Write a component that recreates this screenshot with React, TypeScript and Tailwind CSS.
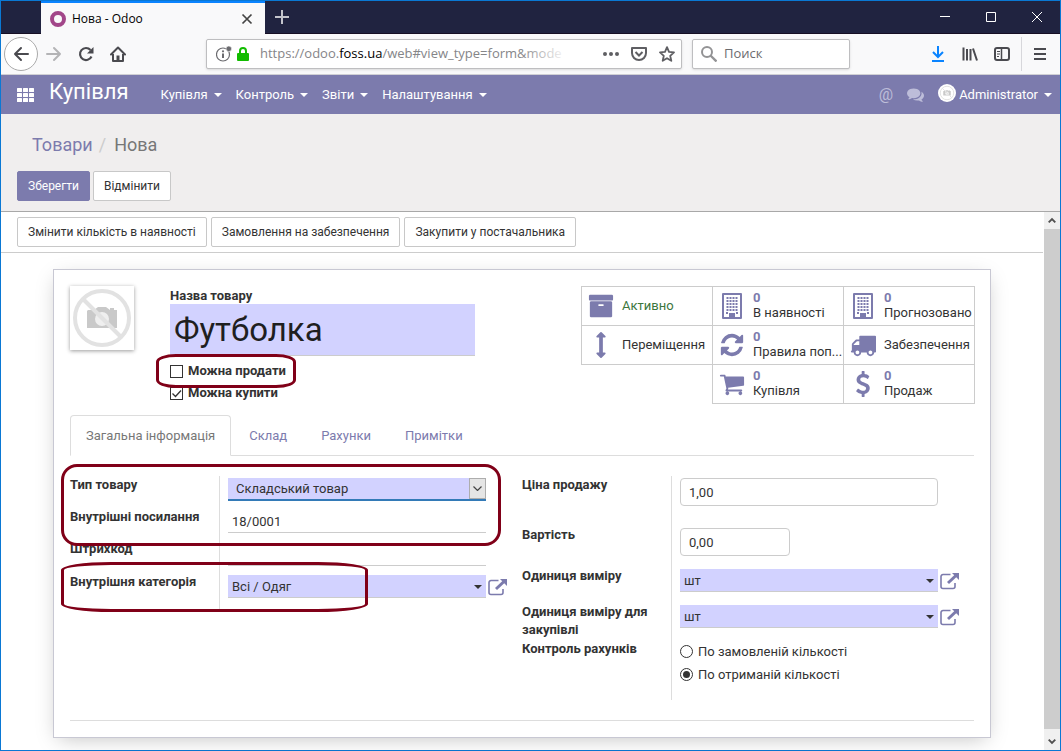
import { useState, type ReactNode } from 'react';

// 1792-unit icon glyphs used across the backend
const ICONS = {
    archive: 'M1088 832q0-26-19-45t-45-19h-256q-26 0-45 19t-19 45 19 45 45 19h256q26 0 45-19t19-45zm576-192v960q0 26-19 45t-45 19h-1408q-26 0-45-19t-19-45v-960q0-26 19-45t45-19h1408q26 0 45 19t19 45zm64-448v256q0 26-19 45t-45 19h-1536q-26 0-45-19t-19-45v-256q0-26 19-45t45-19h1536q26 0 45 19t19 45z',
    arrowsV: 'M1216 320q0 26-19 45t-45 19h-128v1024h128q26 0 45 19t19 45-19 45l-256 256q-19 19-45 19t-45-19l-256-256q-19-19-19-45t19-45 45-19h128v-1024h-128q-26 0-45-19t-19-45 19-45l256-256q19-19 45-19t45 19l256 256q19 19 19 45z',
    refresh: 'M1639 1056q0 5-1 7-64 268-268 434.500t-478 166.500q-146 0-282.500-55t-243.500-157l-129 129q-19 19-45 19t-45-19-19-45v-448q0-26 19-45t45-19h448q26 0 45 19t19 45-19 45l-137 137q71 66 161 102t187 36q134 0 250-65t186-179q11-17 53-117 8-23 30-23h192q13 0 22.500 9.500t9.500 22.500zm25-800v448q0 26-19 45t-45 19h-448q-26 0-45-19t-19-45 19-45l138-138q-148-137-349-137-134 0-250 65t-186 179q-11 17-53 117-8 23-30 23h-199q-13 0-22.500-9.500t-9.500-22.500v-7q65-268 270-434.500t480-166.500q146 0 284 55.500t245 156.500l130-129q19-19 45-19t45 19 19 45z',
    truck: 'M640 1408q0-52-38-90t-90-38-90 38-38 90 38 90 90 38 90-38 38-90zm-384-512h384v-256h-158q-13 0-22 9l-195 195q-9 9-9 22v30zm1280 512q0-52-38-90t-90-38-90 38-38 90 38 90 90 38 90-38 38-90zm256-1088v1024q0 15-4 26.500t-13.500 18.500-16.500 11.500-23.500 6-22.500 2-25.500 0-22.500-.5q0 106-75 181t-181 75-181-75-75-181h-384q0 106-75 181t-181 75-181-75-75-181h-64q-3 0-22.500.5t-25.500 0-22.500-2-23.500-6-16.500-11.500-13.500-18.500-4-26.500q0-26 19-45t45-19v-320q0-8-.5-35t0-38 2.500-34.500 6.500-37 14-30.500 22.500-30l198-198q19-19 50.500-32t58.500-13h160v-192q0-26 19-45t45-19h1024q26 0 45 19t19 45z',
    cart: 'M704 1536q0 52-38 90t-90 38-90-38-38-90 38-90 90-38 90 38 38 90zm896 0q0 52-38 90t-90 38-90-38-38-90 38-90 90-38 90 38 38 90zm128-1088v512q0 24-16.500 42.500t-40.500 21.500l-1044 122q13 60 13 70 0 16-24 64h920q26 0 45 19t19 45-19 45-45 19h-1024q-26 0-45-19t-19-45q0-11 8-31.500t16-36 21.500-40 15.500-29.500l-177-823h-204q-26 0-45-19t-19-45 19-45 45-19h256q16 0 28.500 6.500t19.500 15.500 13 24.500 8 26 5.500 29.500 4.500 26h1201q26 0 45 19t19 45z',
    usd: 'M1362 1185q0 153-99.500 263.500t-258.500 136.500v175q0 14-9 23t-23 9h-135q-13 0-22.500-9.500t-9.500-22.500v-175q-66-9-127.500-31t-101.500-44.500-74-48-46.500-37.500-17.500-18q-17-21-2-41l103-135q7-10 23-12 15-2 24 9l2 2q113 99 243 125 37 8 74 8 81 0 142.500-43t61.500-122q0-28-15-53t-33.500-42-58.500-37.500-66-32-80-32.500q-39-16-61.500-25t-61.500-26.500-62.500-31-56.500-35.500-53.500-42.500-43.500-49-35.500-58-21-66.500-8.500-78q0-138 98-242t255-134v-180q0-13 9.500-22.500t22.500-9.500h135q14 0 23 9t9 23v176q57 6 110.500 23t87 33.500 63.500 37.500 39 29 15 14q17 18 5 38l-81 146q-8 15-23 16-14 3-27-7-3-3-14.500-12t-39-26.500-58.500-32-74.500-26-85.500-11.500q-95 0-155 43t-60 111q0 26 8.500 48t29.500 41.500 39.500 33 56 31 60.500 27 70 27.500q53 20 81 31.500t76 35 75.500 42.500 62 50 53 63.500 31.500 76.500 13 94z',
    comments: 'M1408 768q0 139-94 257t-256.500 186.500-353.500 68.500q-86 0-176-16-124 88-278 128-36 9-86 16h-3q-11 0-20.500-8t-11.500-21q-1-3-1-6.500t.5-6.500 2-6l2.500-5 3.500-5.500 4-5 4.500-5 4-4.500q5-6 23-25t26-29.500 22.500-29 25-38.500 20.500-44q-124-72-195-177t-71-224q0-139 94-257t256.500-186.500 353.500-68.500 353.500 68.500 256.500 186.500 94 257zm384 256q0 120-71 224.500t-195 176.500q10 24 20.500 44t25 38.500 22.500 29 26 29.500 23 25q1 1 4 4.500t4.500 5 4 5 3.500 5.500l2.500 5 2 6 .5 6.500-1 6.500q-3 14-13 22t-22 7q-50-7-86-16-154-40-278-128-90 16-176 16-271 0-472-132 58 4 88 4 161 0 309-45t264-129q125-92 192-212t67-254q0-77-23-152 129 71 204 178t75 230z',
};

function Glyph({ name, className }: { name: keyof typeof ICONS; className: string }) {
    return (
        <svg viewBox="0 0 1792 1792" fill="currentColor" className={className}>
            <path d={ICONS[name]} />
        </svg>
    );
}

function BuildingIcon() {
    const rows = [4, 7, 10, 13, 16];
    const cols = [5, 8, 11, 14];
    return (
        <svg viewBox="0 0 20 26" className="w-5 h-[26px]" fill="currentColor">
            <path fillRule="evenodd" d="M1 0h18a1 1 0 0 1 1 1v24a1 1 0 0 1-1 1H1a1 1 0 0 1-1-1V1a1 1 0 0 1 1-1zm1 2v22h5v-4h6v4h5V2z" />
            {rows.map((y) => cols.map((x) => <rect key={`${x}-${y}`} x={x - 0.5} y={y} width="2" height="2" />))}
            <rect x="4" y="19" width="2" height="2" />
            <rect x="14" y="19" width="2" height="2" />
        </svg>
    );
}

function Caret() {
    return (
        <svg viewBox="0 0 8 4" className="w-2 h-1 shrink-0" fill="currentColor">
            <path d="M0 0h8L4 4z" />
        </svg>
    );
}

function ExternalLink() {
    return (
        <button aria-label="Відкрити" className="shrink-0 text-[#7c7bad]">
            <svg viewBox="0 0 20 18" className="w-5 h-[18px]" fill="none" stroke="currentColor">
                <path d="M10.500 2.500H3A2 2 0 0 0 1 4.500V14.500A2 2 0 0 0 3 16.500H13A2 2 0 0 0 15 14.500V11" strokeWidth="1.600" />
                <path d="M8 11L16 3.500" strokeWidth="3" />
                <path d="M12 1h7v7z" fill="currentColor" stroke="none" />
            </svg>
        </button>
    );
}

function NoPhoto({ className }: { className: string }) {
    return (
        <svg viewBox="0 0 64 64" className={className}>
            <path d="M18 24h6l4-3h8l4 3h7v18H17V25z" fill="#c9c9c9" />
            <rect x="40" y="22" width="4" height="4" fill="#c9c9c9" />
            <circle cx="32" cy="33" r="7" fill="#efefef" />
            <circle cx="32" cy="32" r="27" fill="none" stroke="#e2e2e2" strokeWidth="4" />
            <path d="M13 13l38 38" stroke="#e2e2e2" strokeWidth="4" />
        </svg>
    );
}

function BrowserChrome() {
    return (
        <div className="font-['Open_Sans',sans-serif]">
            <div className="flex h-[33px] bg-[#202340] border-b border-[#160f24]">
                <div className="flex items-center ml-10 w-56 px-2 -mb-px bg-[#f9f9fa] border-t-2 border-[#0a84ff]">
                    <span className="ml-px mr-1.5 w-4 h-4 rounded-full border-4 border-[#a24689]" />
                    <span className="text-[12px] text-black flex-1">Нова - Odoo</span>
                    <button aria-label="Закрити вкладку" className="mr-1 text-[#444]">
                        <svg viewBox="0 0 12 12" className="w-3 h-3" stroke="currentColor" strokeWidth="1.700"><path d="M1.500 1.500l9 9M10.500 1.500l-9 9" /></svg>
                    </button>
                </div>
                <button aria-label="Нова вкладка" className="ml-2.5">
                    <svg viewBox="0 0 14 14" className="w-3.5 h-3.5" stroke="#c3c4cc" strokeWidth="2"><path d="M7 0v14M0 7h14" /></svg>
                </button>
                <div className="flex items-center ml-auto mr-[18px] gap-9">
                    <button aria-label="Згорнути"><svg viewBox="0 0 10 10" className="w-2.5 h-2.5" stroke="#fff"><path d="M0 4.500h10" /></svg></button>
                    <button aria-label="Розгорнути"><svg viewBox="0 0 10 10" className="w-2.5 h-2.5" stroke="#fff" fill="none"><path d="M.5.500h9v9h-9z" /></svg></button>
                    <button aria-label="Закрити"><svg viewBox="0 0 10 10" className="w-2.5 h-2.5" stroke="#fff"><path d="M0 0l10 10M10 0L0 10" /></svg></button>
                </div>
            </div>

            <div className="flex items-center h-[41px] pl-[3px] pr-3.5 bg-[#f9f9fa] border-b border-[#d0d0d4] text-[#4a4a4f]">
                <button aria-label="Назад" className="flex items-center justify-center w-[34px] h-[34px] rounded-full bg-white border border-[#aaa]">
                    <svg viewBox="0 0 16 16" className="w-4 h-4" fill="none" stroke="currentColor" strokeWidth="2" strokeLinecap="round" strokeLinejoin="round"><path d="M15 8H2M8 2L2 8l6 6" /></svg>
                </button>
                <button aria-label="Вперед" className="ml-2 text-[#b4b4b6]">
                    <svg viewBox="0 0 16 16" className="w-4 h-4" fill="none" stroke="currentColor" strokeWidth="2" strokeLinecap="round" strokeLinejoin="round"><path d="M1 8h13M8 2l6 6-6 6" /></svg>
                </button>
                <button aria-label="Оновити" className="ml-4">
                    <svg viewBox="0 0 16 16" className="w-4 h-4"><path d="M13.500 10.500A6 6 0 1 1 12.500 4" fill="none" stroke="currentColor" strokeWidth="2.200" /><path d="M15.500 1v6.500H9z" fill="currentColor" /></svg>
                </button>
                <button aria-label="Додому" className="ml-4">
                    <svg viewBox="0 0 16 16" className="w-4 h-4" fill="none" stroke="currentColor" strokeWidth="2" strokeLinejoin="round"><path d="M1 8.500L8 1.500l7 7" strokeLinecap="round" /><path d="M3 8v7h10V8" /><path d="M8 9.500V15" strokeWidth="3" /></svg>
                </button>
                <div className="flex-1" />
                <div className="flex items-center w-[476px] h-[30px] px-2 bg-white border border-[#bebec0] rounded-xs shadow-sm">
                    <svg viewBox="0 0 16 16" className="w-4 h-4 shrink-0 ml-px" fill="none" stroke="#6b6b6f"><circle cx="7" cy="8.500" r="6.500" strokeWidth="1.200" /><path d="M7 7.500v4.500" strokeWidth="2" /><circle cx="7" cy="5.300" r="1.100" fill="#6b6b6f" stroke="none" /><circle cx="12.800" cy="2.800" r="2.800" fill="#6b6b6f" stroke="#fff" strokeWidth=".6" /></svg>
                    <svg viewBox="0 0 12 14" className="w-3 h-3.5 shrink-0 ml-[5px]"><rect y="6" width="12" height="8" rx="1" fill="#12bc00" /><path d="M3 7V4a3 3 0 0 1 6 0v3" fill="none" stroke="#12bc00" strokeWidth="2" /></svg>
                    <div className="relative ml-[11px] w-[308px] overflow-hidden whitespace-nowrap text-[13px] text-[#858588]">
                        https://odoo.<span className="text-black">foss.ua</span>/web#view_type=form&amp;mode
                        <span className="absolute inset-y-0 right-0 w-12 bg-linear-to-r from-transparent to-white" />
                    </div>
                    <button aria-label="Дії" className="ml-auto"><svg viewBox="0 0 16 4" className="w-4 h-1" fill="#5f5f63"><circle cx="2" cy="2" r="2" /><circle cx="8" cy="2" r="2" /><circle cx="14" cy="2" r="2" /></svg></button>
                    <button aria-label="Pocket" className="ml-3 text-[#5f5f63]"><svg viewBox="0 0 16 14" className="w-4 h-3.5" fill="none" stroke="currentColor" strokeWidth="2"><path d="M1 1h14v5a7 7 0 0 1-14 0z" strokeLinejoin="round" /><path d="M4.500 5L8 8.500 11.500 5" /></svg></button>
                    <button aria-label="Закладка" className="ml-3 -mr-0.5 text-[#5f5f63]"><svg viewBox="0 0 16 16" className="w-4 h-4" fill="none" stroke="currentColor" strokeWidth="1.800" strokeLinejoin="round"><path d="M8 1.200l2 4.700 5 .5-3.800 3.400 1.100 5L8 12.200l-4.300 2.600 1.100-5L1 6.400l5-.5z" /></svg></button>
                </div>
                <div className="flex items-center ml-2.5 w-[158px] h-[30px] pl-2 bg-white border border-[#bebec0] rounded-xs shadow-sm">
                    <svg viewBox="0 0 16 16" className="w-4 h-4 shrink-0" fill="none" stroke="#939395" strokeWidth="2"><circle cx="6" cy="6" r="5" /><path d="M9.500 9.500l6 6" strokeWidth="2.400" /></svg>
                    <input aria-label="Поиск" placeholder="Поиск" className="ml-[7px] w-full min-w-0 text-[13px] placeholder-[#6c6c6f] outline-none" />
                </div>
                <div className="flex-1" />
                <div className="flex items-center gap-4">
                    <button aria-label="Завантаження"><svg viewBox="0 0 16 16" className="w-4 h-4" fill="none" stroke="#0a84ff" strokeWidth="2"><path d="M8 0v11M3 6l5 5 5-5M2 15h12" /></svg></button>
                    <button aria-label="Бібліотека"><svg viewBox="0 0 16 16" className="w-4 h-4" fill="none" stroke="currentColor" strokeWidth="2"><path d="M1.500 1.500v13M5 3v11.500M8.500 3v11.500" /><path d="M11 2.500l4 12" /></svg></button>
                    <button aria-label="Бічна панель"><svg viewBox="0 0 16 14" className="w-4 h-3.5" fill="none" stroke="currentColor"><rect x="1" y="1" width="14" height="12" rx="2" strokeWidth="2" /><path d="M7.500 1v12" strokeWidth="1.500" /><path d="M3 4.500h3M3 7h3M3 9.500h2" /></svg></button>
                </div>
                <span className="ml-[11px] h-[34px] border-l border-[#d7d7db]" />
                <button aria-label="Меню" className="ml-3"><svg viewBox="0 0 12 12" className="w-3 h-3" stroke="currentColor" strokeWidth="2"><path d="M0 1h12M0 6h12M0 11h12" /></svg></button>
            </div>
        </div>
    );
}

function NavMenu({ label }: { label: string }) {
    return (
        <button className="flex items-center gap-1.5">
            {label}
            <Caret />
        </button>
    );
}

function Navbar() {
    return (
        <nav className="flex items-center h-[39px] pl-4 pr-2 bg-[#7c7bad] text-white text-[13px]">
            <button aria-label="Програми">
                <svg viewBox="0 0 17 14" className="w-[17px] h-3.5" fill="#fff">
                    {[0, 5, 10].map((y) => [0, 6, 12].map((x) => <rect key={`${x}-${y}`} x={x} y={y} width="5" height="4" rx=".5" />))}
                </svg>
            </button>
            <span className="ml-[15px] mb-1.5 text-[22px] leading-7">Купівля</span>
            <div className="flex gap-3.5 ml-8">
                <NavMenu label="Купівля" />
                <NavMenu label="Контроль" />
                <NavMenu label="Звіти" />
                <NavMenu label="Налаштування" />
            </div>
            <div className="flex items-center ml-auto">
                <button className="text-base text-[#bdbdd9]">@</button>
                <button aria-label="Обговорення" className="ml-3.5 text-[#bdbdd9]"><Glyph name="comments" className="w-[17px] h-[17px]" /></button>
                <button className="flex items-center ml-3.5">
                    <span className="flex items-center justify-center w-[18px] h-[18px] mr-[3px] mb-1 rounded-full bg-white"><NoPhoto className="w-4 h-4" /></span>
                    <span className="mr-1.5">Administrator</span>
                    <Caret />
                </button>
            </div>
        </nav>
    );
}

function Button({ children, primary }: { children: ReactNode; primary?: boolean }) {
    return (
        <button
            className={`h-[30px] px-2.5 text-[12px] rounded-xs border whitespace-nowrap ${primary
                ? 'bg-[#7c7bad] border-[#7c7bad] text-white'
                : 'bg-white border-[#c8c8c8] text-[#333]'
                }`}
        >
            {children}
        </button>
    );
}

function Stat({ icon, label, value, className = '' }: { icon: ReactNode; label: string; value?: string; className?: string }) {
    return (
        <button className={`flex items-center h-10 -mr-px -mb-px border border-[#ccc] text-left ${className}`}>
            <span className="flex justify-center w-[38px] shrink-0 text-[#7c7bad]">{icon}</span>
            <span className="ml-0.5 pb-0.5 whitespace-nowrap leading-[15px]">
                {value && <span className="block font-bold text-[#7c7bad]">{value}</span>}
                <span className="block">{label}</span>
            </span>
        </button>
    );
}

// label cell carries the vertical separator of the group
function Row({ id, label, height, children }: { id?: string; label: string; height: string; children?: ReactNode }) {
    return (
        <div className={`flex ${height}`}>
            <div className="w-[150px] shrink-0 border-r border-[#ddd]">
                <label htmlFor={id} className="block font-bold leading-[18px] pr-3">{label}</label>
            </div>
            <div className="flex items-start flex-1 pl-2 pt-0.5">{children}</div>
        </div>
    );
}

function Many2One({ id, value }: { id: string; value: string }) {
    return (
        <>
            <div className="relative w-[258px]">
                <input id={id} defaultValue={value} className="block w-full h-[23px] px-1 bg-[#d2d2ff] border-b border-[#ccc] outline-none" />
                <span className="absolute right-1 top-2.5"><Caret /></span>
            </div>
            <span className="flex ml-0.5 pt-[3px]"><ExternalLink /></span>
        </>
    );
}

function Checkbox({ label, checked }: { label: string; checked?: boolean }) {
    return (
        <label className="flex items-center h-[22px] font-bold">
            <span className="relative flex mr-[5px]">
                <input type="checkbox" defaultChecked={checked} className="peer appearance-none w-[13px] h-[13px] bg-white border border-[#333]" />
                <svg viewBox="0 0 13 13" className="absolute inset-0 hidden peer-checked:block pointer-events-none" fill="none" stroke="#333" strokeWidth="1.300"><path d="M2.500 6.500l3 3 5.500-6" /></svg>
            </span>
            {label}
        </label>
    );
}

function Radio({ label, checked }: { label: string; checked?: boolean }) {
    return (
        <label className="flex items-center h-[23px]">
            <input type="radio" name="control" defaultChecked={checked} className="appearance-none w-[13px] h-[13px] mr-[5px] rounded-full border border-[#333] bg-white bg-clip-content p-0.5 checked:bg-[#333]" />
            {label}
        </label>
    );
}

const TABS = ['Загальна інформація', 'Склад', 'Рахунки', 'Примітки'];

function Sheet() {
    const [tab, setTab] = useState(0);

    return (
        <div className="mx-[52px] mt-4 mb-3 p-4 bg-white border border-[#c8c8d3] shadow-[0_5px_20px_-5px_rgba(0,0,0,0.25)]">
            <div className="flex justify-between">
                <div className="flex">
                    <div className="w-16 h-16 mr-9 shrink-0 bg-white shadow-[0_1px_4px_rgba(0,0,0,0.4)]">
                        <NoPhoto className="w-16 h-16" />
                    </div>
                    <div className="w-[305px]">
                        <label htmlFor="name" className="block font-bold h-[18px] leading-5">Назва товару</label>
                        <input id="name" defaultValue="Футболка" className="block w-full h-[52px] px-1 text-[33px] text-[#1f1f1f] bg-[#d2d2ff] border-b border-[#ccc] outline-none" />
                        <div className="relative mt-1">
                            <Checkbox label="Можна продати" />
                            <Checkbox label="Можна купити" checked />
                            <span className="absolute -left-3.5 -top-1.5 w-[140px] h-[34px] border-3 border-[#800018] rounded-[20px/8px] pointer-events-none" />
                        </div>
                    </div>
                </div>
                <div className="grid grid-cols-3 content-start w-[393px]">
                    <Stat icon={<Glyph name="archive" className="w-[26px] h-[26px]" />} label="Активно" className="text-[#3c763d]" />
                    <Stat icon={<BuildingIcon />} value="0" label="В наявності" />
                    <Stat icon={<BuildingIcon />} value="0" label="Прогнозовано" />
                    <Stat icon={<Glyph name="arrowsV" className="w-[26px] h-[26px]" />} label="Переміщення" />
                    <Stat icon={<Glyph name="refresh" className="w-[26px] h-[26px]" />} value="0" label="Правила поп..." />
                    <Stat icon={<Glyph name="truck" className="w-[26px] h-[26px]" />} label="Забезпечення" />
                    <Stat icon={<Glyph name="cart" className="w-[26px] h-[26px]" />} value="0" label="Купівля" className="col-start-2" />
                    <Stat icon={<Glyph name="usd" className="w-[26px] h-[26px]" />} value="0" label="Продаж" />
                </div>
            </div>

            <div className="flex mt-[11px] border-b border-[#ddd]">
                {TABS.map((name, i) => (
                    <button
                        key={name}
                        onClick={() => setTab(i)}
                        className={`h-[41px] -mb-px mr-0.5 px-[15px] border rounded-t-sm ${tab === i
                            ? 'bg-white border-[#ddd] border-b-white text-[#777]'
                            : 'border-transparent text-[#7c7bad]'
                            }`}
                    >
                        {name}
                    </button>
                ))}
            </div>

            <div className="grid grid-cols-2 items-start mt-5 pb-5 border-b border-[#ddd]">
                <div className="relative">
                    <Row id="type" label="Тип товару" height="h-8">
                        <div className="relative w-[258px]">
                            <select id="type" className="block appearance-none w-full h-[23px] px-2 bg-[#d2d2ff] border-b-2 border-[#337ab7] outline-none">
                                <option>Складський товар</option>
                                <option>Послуга</option>
                            </select>
                            <span className="absolute right-0 top-0 flex items-center justify-center w-[17px] h-[21px] bg-[#e5e5e5] border border-[#adadad] pointer-events-none">
                                <svg viewBox="0 0 9 5" className="w-[9px] h-[5px]" fill="none" stroke="#444" strokeWidth="1.200"><path d="M.5.500l4 4 4-4" /></svg>
                            </span>
                        </div>
                    </Row>
                    <Row id="ref" label="Внутрішні посилання" height="h-8">
                        <input id="ref" defaultValue="18/0001" className="w-[258px] h-[23px] px-1 border-b border-[#ccc] outline-none" />
                    </Row>
                    <Row id="barcode" label="Штрихкод" height="h-[33px]">
                        <input id="barcode" className="w-[258px] h-6 px-1 border-b border-[#ccc] outline-none" />
                    </Row>
                    <Row id="categ" label="Внутрішня категорія" height="h-9">
                        <Many2One id="categ" value="Всі / Одяг" />
                    </Row>
                    <span className="absolute -left-[9px] -top-3 w-[440px] h-[82px] border-3 border-[#800018] rounded-2xl pointer-events-none" />
                    <span className="absolute -left-[9px] top-[86px] w-[307px] h-[50px] border-3 border-[#800018] rounded-[50px/8px] pointer-events-none" />
                </div>

                <div>
                    <Row id="price" label="Ціна продажу" height="h-[50px]">
                        <input id="price" defaultValue="1,00" className="w-[258px] h-7 px-2 border border-[#ccc] rounded-sm outline-none" />
                    </Row>
                    <Row id="cost" label="Вартість" height="h-[41px]">
                        <input id="cost" defaultValue="0,00" className="w-[110px] h-7 px-2 border border-[#ccc] rounded-sm outline-none" />
                    </Row>
                    <Row id="uom" label="Одиниця виміру" height="h-9">
                        <Many2One id="uom" value="шт" />
                    </Row>
                    <Row id="uom-po" label="Одиниця виміру для закупівлі" height="h-[37px]">
                        <Many2One id="uom-po" value="шт" />
                    </Row>
                    <Row label="Контроль рахунків" height="h-[60px]">
                        <div className="-mt-0.5">
                            <Radio label="По замовленій кількості" />
                            <Radio label="По отриманій кількості" checked />
                        </div>
                    </Row>
                </div>
            </div>
        </div>
    );
}

export default function App() {
    return (
        <div className="flex flex-col min-h-screen border border-[#0a78d4] bg-white font-[Roboto,sans-serif] text-[13px] text-[#333]">
            <BrowserChrome />
            <Navbar />

            <div className="px-4 pt-[18px] pb-2.5 bg-[#f0eeee] border-b border-[#a8a8a8]">
                <div className="flex gap-1.5 pl-[15px] text-[18px] leading-[26px]">
                    <a href="#" className="text-[#7c7bad]">Товари</a>
                    <span className="mr-0.5 text-[#ccc]">/</span>
                    <span className="text-[#777]">Нова</span>
                </div>
                <div className="flex gap-[3px] mt-[13px]">
                    <Button primary>Зберегти</Button>
                    <Button>Відмінити</Button>
                </div>
            </div>

            <div className="flex flex-1">
                <main className="flex-1 min-w-0">
                    <div className="flex gap-1 px-4 py-[5px] border-b border-[#ccc]">
                        <Button>Змінити кількість в наявності</Button>
                        <Button>Замовлення на забезпечення</Button>
                        <Button>Закупити у постачальника</Button>
                    </div>
                    <Sheet />
                </main>
                <div className="flex flex-col w-[17px] border-l border-white bg-[#f0f0f0] text-[#505050]">
                    <svg viewBox="0 0 17 17" className="w-4 h-[17px]" fill="none" stroke="currentColor" strokeWidth="2"><path d="M5 10.500L8.500 7l3.500 3.500" /></svg>
                    <div className="flex-1 mb-1 bg-[#cdcdcd]" />
                    <svg viewBox="0 0 17 17" className="w-4 h-[17px]" fill="none" stroke="currentColor" strokeWidth="2"><path d="M5 6.500L8.500 10 12 6.500" /></svg>
                </div>
            </div>
        </div>
    );
}
